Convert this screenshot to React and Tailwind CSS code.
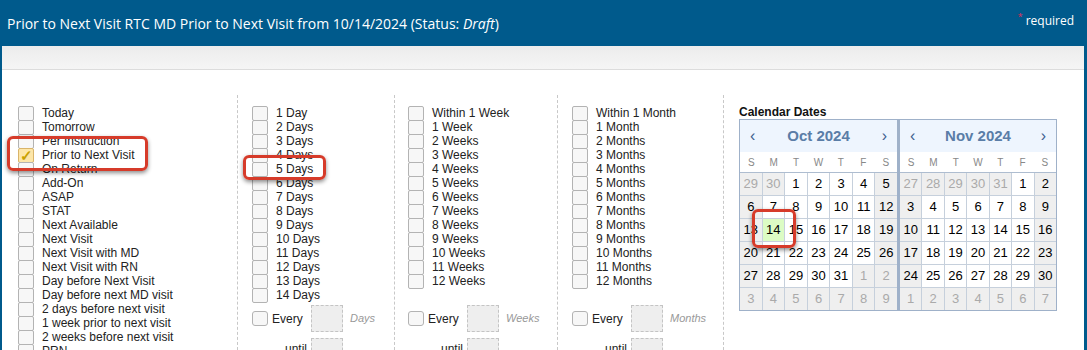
import React from 'react';

const dayOptions = [
  'Today', 'Tomorrow', 'Per Instruction', 'Prior to Next Visit', 'On Return', 'Add-On', 'ASAP', 'STAT',
  'Next Available', 'Next Visit', 'Next Visit with MD', 'Next Visit with RN', 'Day before Next Visit',
  'Day before next MD visit', '2 days before next visit', '1 week prior to next visit',
  '2 weeks before next visit', 'PRN',
];
const days = ['1 Day', ...Array.from({ length: 13 }, (_, i) => `${i + 2} Days`)];
const weeks = ['Within 1 Week', '1 Week', ...Array.from({ length: 11 }, (_, i) => `${i + 2} Weeks`)];
const months = ['Within 1 Month', '1 Month', ...Array.from({ length: 11 }, (_, i) => `${i + 2} Months`)];

function CheckList({ items, checked }) {
  return (
    <div className="flex flex-col">
      {items.map((label) => (
        <div key={label} className="flex h-[14px] shrink-0 items-start">
          <div
            className={
              'flex h-[15px] w-[16px] shrink-0 items-center justify-center rounded-[2px] border ' +
              (label === checked ? 'border-[#d9b46a] bg-[#fde6a8]' : 'border-[#b3b3b3] bg-[#f7f7f7]')
            }
          >
            {label === checked && <span className="text-[15px] leading-none font-bold text-[#c9a100]">✓</span>}
          </div>
          <span className="ml-[8px] whitespace-nowrap text-[12px] leading-[14px] text-[#222]">{label}</span>
        </div>
      ))}
    </div>
  );
}

function EveryRow({ unit }) {
  return (
    <div className="flex flex-col gap-[6px]">
      <div className="flex h-[27px] items-center">
        <div className="h-[15px] w-[16px] rounded-[3px] border border-[#b3b3b3] bg-[#f7f7f7]" />
        <span className="ml-[4px] w-[39px] text-[12px] text-[#222]">Every</span>
        <div className="h-[27px] w-[32px] border border-dashed border-[#c4c4c4] bg-[#eee]" />
        <span className="ml-[7px] text-[11px] italic text-[#999]">{unit}</span>
      </div>
      <div className="flex h-[27px] items-start">
        <span className="w-[59px] pr-[4px] text-right text-[12px] leading-[22px] text-[#222]">until</span>
        <div className="h-[27px] w-[32px] border border-dashed border-[#c4c4c4] bg-[#eee]" />
      </div>
    </div>
  );
}

function buildMonth(prev, count) {
  const cells = [];
  prev.forEach((d) => cells.push({ d, muted: true }));
  for (let d = 1; d <= count; d++) cells.push({ d, muted: false });
  let n = 1;
  while (cells.length < 42) cells.push({ d: n++, muted: true });
  return cells;
}

function Month({ title, cells, selected, extraLeft }) {
  return (
    <div className={'w-[159px] border border-[#9fb1c9] ' + (extraLeft ? 'border-l-2' : '')}>
      <div className="flex h-[32px] items-center justify-between bg-[#eef5fe] px-[10px]">
        <span className="text-[16px] leading-none text-[#40618f]">‹</span>
        <span className="text-[15px] font-bold text-[#5a7da7]">{title}</span>
        <span className="text-[16px] leading-none text-[#40618f]">›</span>
      </div>
      <div className="grid h-[21px] grid-cols-7 items-center border-b border-[#aebdd0] bg-white">
        {['S', 'M', 'T', 'W', 'T', 'F', 'S'].map((l, i) => (
          <span key={i} className="text-center text-[10px] text-[#888]">{l}</span>
        ))}
      </div>
      <div className="grid grid-cols-7 gap-px bg-[#c6d0dc]">
        {cells.map((c, i) => {
          const weekend = i % 7 === 0 || i % 7 === 6;
          let cls = 'bg-white text-black';
          if (c.muted) cls = 'bg-[#efefef] text-[#aaa]';
          else if (c.d === selected) cls = 'bg-[#dcfcc4] text-black';
          else if (weekend) cls = 'bg-[#efefef] text-black';
          return (
            <div key={i} className={'flex h-[22px] items-center justify-center text-[13px] ' + cls}>
              {c.d}
            </div>
          );
        })}
      </div>
    </div>
  );
}

function Highlight({ className }) {
  return (
    <div
      className={
        'pointer-events-none absolute rounded-[6px] border-[3px] border-[#d63b2a] shadow-[0_2px_4px_rgba(0,0,0,0.45)] ' +
        className
      }
    />
  );
}

export default function App() {
  const oct = buildMonth([29, 30], 31);
  const nov = buildMonth([27, 28, 29, 30, 31], 30);

  return (
    <div className="relative h-[350px] w-[1087px] overflow-hidden bg-white font-['Liberation_Sans',Arial,sans-serif]">
      {/* Title bar */}
      <div className="flex h-[46px] items-center justify-between bg-[#005a8c] pl-[7px] pr-[13px] text-white">
        <span className="font-['Open_Sans',sans-serif] text-[14px]">
          Prior to Next Visit RTC MD Prior to Next Visit from 10/14/2024 (Status: <i>Draft</i>)
        </span>
        <span className="-mt-[5px] font-['Open_Sans',sans-serif] text-[12px]">
          <sup className="mr-[3px] text-[9px] text-[#e2305a]">*</sup>required
        </span>
      </div>

      <div className="flex h-[304px] flex-col border-l-[2px] border-r-[3px] border-[#005a8c]">
        {/* Toolbar strip */}
        <div className="h-[24px] shrink-0 border-b border-[#dcdcdc] bg-gradient-to-b from-[#ececec] to-[#f5f5f5]" />

        <div className="flex min-h-0 flex-1 pt-[25px]">
          <div className="w-[236px] border-r border-dashed border-[#c8c8c8] pl-[16px] pt-[11px]">
            <CheckList items={dayOptions} checked="Prior to Next Visit" />
          </div>

          <div className="w-[157px] border-r border-dashed border-[#c8c8c8] pl-[14px] pt-[11px]">
            <div className="h-[199px] shrink-0">
              <CheckList items={days} />
            </div>
            <EveryRow unit="Days" />
          </div>

          <div className="w-[163px] border-r border-dashed border-[#c8c8c8] pl-[13px] pt-[11px]">
            <div className="h-[199px] shrink-0">
              <CheckList items={weeks} />
            </div>
            <EveryRow unit="Weeks" />
          </div>

          <div className="w-[166px] border-r border-dashed border-[#c8c8c8] pl-[14px] pt-[11px]">
            <div className="h-[199px] shrink-0">
              <CheckList items={months} />
            </div>
            <EveryRow unit="Months" />
          </div>

          <div className="flex-1 pl-[15px] pt-[11px]">
            <div className="text-[12px] font-bold leading-[13px] text-[#111]">Calendar Dates</div>
            <div className="flex">
              <Month title="Oct 2024" cells={oct} selected={14} />
              <Month title="Nov 2024" cells={nov} extraLeft />
            </div>
          </div>
        </div>
      </div>

      <Highlight className="left-[7px] top-[136px] h-[35px] w-[141px]" />
      <Highlight className="left-[243px] top-[155px] h-[25px] w-[83px]" />
      <Highlight className="left-[752px] top-[209px] h-[39px] w-[44px]" />
    </div>
  );
}
